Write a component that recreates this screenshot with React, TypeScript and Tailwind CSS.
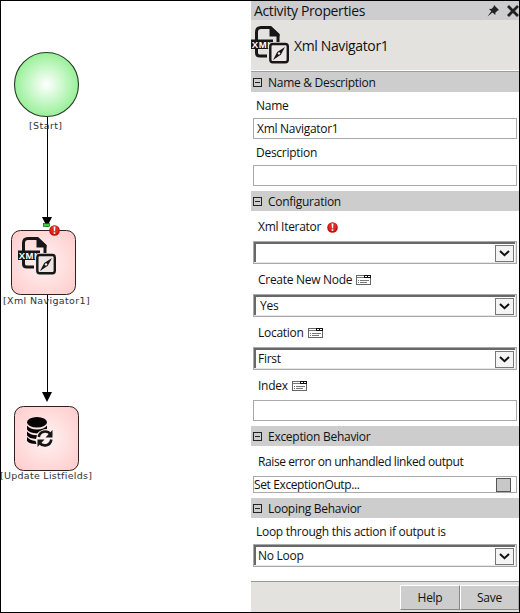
import React from 'react';

function XmlIcon({ className }: { className: string }) {
  return (
    <svg viewBox="0 0 38 38" className={className} fill="none">
      <path d="M5.5 14V6Q5.5 1.5 10 1.5H19L27 9V16" stroke="#171717" strokeWidth="3" />
      <path d="M18.5 0H20L28.5 8V10.5H18.5Z" fill="#171717" />
      <path d="M5.5 22V27Q5.5 30 9 30H16" stroke="#171717" strokeWidth="3" />
      <rect x="0" y="13.5" width="22" height="9.5" fill="#171717" />
      <text x="0.8" y="21.6" fill="#fff" className="font-['Liberation_Sans'] text-[9.5px] font-bold" textLength="21">XML</text>
      <rect x="17.2" y="16" width="22" height="22" rx="4" className="fill-[#eee5e4]" />
      <rect x="19.3" y="18" width="17.5" height="18.2" rx="2.4" stroke="#171717" strokeWidth="2.4" />
      <path d="M34 21L29.8 28.8L22 34L26.2 26Z" fill="#171717" />
      <circle cx="28" cy="27.4" r="1.2" fill="#eee" />
    </svg>
  );
}

function ErrorBadge({ className }: { className: string }) {
  return (
    <svg viewBox="0 0 11 11" className={className}>
      <circle cx="5.5" cy="5.5" r="5.3" fill="#c41010" />
      <circle cx="5.5" cy="4.8" r="4" fill="#e02a20" />
      <path d="M4.6 1.5H6.4L6.1 6.3H4.9Z" fill="#fff" />
      <rect x="4.7" y="7.3" width="1.6" height="1.6" fill="#fff" />
    </svg>
  );
}

function ListIcon({ className }: { className: string }) {
  return (
    <svg viewBox="0 0 15 10" className={className} shapeRendering="crispEdges">
      <rect x="0.5" y="0.5" width="14" height="9" fill="#fff" stroke="#666" />
      <rect x="8" y="0" width="7" height="3" fill="#111" />
      <rect x="9" y="1" width="2" height="1" fill="#fff" />
      <rect x="12" y="1" width="2" height="1" fill="#fff" />
      <path d="M1 2.5H8" stroke="#777" />
      <path d="M2 5.5H3M4 5.5H13M2 7.5H3M4 7.5H11" stroke="#777" />
    </svg>
  );
}

function Section({ title, className }: { title: string; className: string }) {
  return (
    <div className={`flex shrink-0 items-center bg-[#cdcdcd] pl-[2px] ${className}`}>
      <svg viewBox="0 0 9 9" className="h-[9px] w-[9px]" shapeRendering="crispEdges">
        <rect x="0.5" y="0.5" width="8" height="8" fill="none" stroke="#222" />
        <path d="M2 4.5H7" stroke="#222" />
      </svg>
      <span className="relative top-px ml-[6px]">{title}</span>
    </div>
  );
}

function Label({ text, className, children }: { text: string; className: string; children?: React.ReactNode }) {
  return (
    <div className={`flex shrink-0 items-center pt-[2px] ${className}`}>
      <span>{text}</span>
      {children}
    </div>
  );
}

function Select({ value, inset }: { value: string; inset: string }) {
  return (
    <div className="ml-[2px] h-[23px] w-[264px] shrink-0 border border-[#a9a9a9] bg-[#e6e6e6] pr-[1px] pb-[1px]">
      <div className="flex h-full items-center border-t-2 border-l-2 border-[#686868] bg-white">
        <span className={`flex-1 ${inset}`}>{value}</span>
        <span className="mr-[1px] flex h-[17px] w-[19px] items-center justify-center border border-[#777] bg-[#f4f4f4]">
          <svg viewBox="0 0 11 7" className="h-[7px] w-[11px]" fill="none">
            <path d="M1 1L5.5 5.2L10 1" stroke="#111" strokeWidth="2" />
          </svg>
        </span>
      </div>
    </div>
  );
}

function Canvas() {
  return (
    <div className="relative w-[250px] shrink-0 font-['DejaVu_Sans',sans-serif] text-[9.5px] leading-[12px] text-[#333]">
      <svg viewBox="0 0 250 611" className="absolute top-0 left-0 h-[611px] w-[250px]">
        <defs>
          <radialGradient id="start">
            <stop offset="0" stopColor="#fff" />
            <stop offset="0.5" stopColor="#ccf8cc" />
            <stop offset="1" stopColor="#98f098" />
          </radialGradient>
          <radialGradient id="step" r="0.7">
            <stop offset="0" stopColor="#fff3f3" />
            <stop offset="1" stopColor="#ffcaca" />
          </radialGradient>
        </defs>
        <circle cx="45.5" cy="83.5" r="32" fill="url(#start)" stroke="#283828" strokeWidth="1.1" />
        <path d="M46.5 116V218M46.5 294V393" stroke="#000" />
        <path d="M41 216H51L46 226Z M41 391H51L46 401Z" fill="#000" />
        <rect x="42.5" y="222.5" width="6" height="3" fill="#35d43c" stroke="#133d13" strokeWidth="0.6" />
        <rect x="10.5" y="229.5" width="64" height="64" rx="9" fill="url(#step)" stroke="#302020" />
        <rect x="13.5" y="405.5" width="64" height="64" rx="9" fill="url(#step)" stroke="#302020" />
        <ellipse cx="36" cy="421.2" rx="10" ry="5.2" fill="#050505" />
        <path d="M26 424.5Q29 428.5 36 428.5Q43 428.5 46 424.5V428Q40 428 36 432.5Q28 432 26 428.5Z" fill="#050505" />
        <path d="M26 430.5Q29 434 36 434.2L35 438Q28 437.5 26 434.5Z M26 436Q29 439.5 34.5 440L35.5 443Q28 443 26 440Z" fill="#050505" />
        <path d="M37.8 436C38.5 430 46 428.8 49.5 433.2" fill="none" stroke="#171717" strokeWidth="2.6" />
        <path d="M51.5 429V436.5H44.5Z" fill="#171717" />
        <path d="M50.3 438.5C49.5 445 42 446 38.5 441.8" fill="none" stroke="#171717" strokeWidth="2.6" />
        <path d="M36.5 446V438.5H43.5Z" fill="#171717" />
      </svg>
      <XmlIcon className="absolute top-[236px] left-[17px] h-[38px] w-[38px]" />
      <ErrorBadge className="absolute top-[224px] left-[48px] h-[11px] w-[11px]" />
      <span className="absolute top-[119px] left-[28px] tracking-[0.4px] whitespace-nowrap">[Start]</span>
      <span className="absolute top-[294px] left-[2px] tracking-[0.35px] whitespace-nowrap">[Xml Navigator1]</span>
      <span className="absolute top-[469px] left-[-1px] tracking-[0.28px] whitespace-nowrap">[Update Listfields]</span>
    </div>
  );
}

export default function App() {
  return (
    <div className="flex h-[613px] w-[520px] overflow-hidden border border-black bg-white">
      <Canvas />
      <div className="flex w-[268px] shrink-0 flex-col font-['Open_Sans',sans-serif] text-[12px] leading-[16px] tracking-[-0.28px] whitespace-nowrap text-[#111]">
        <div className="flex h-[19px] shrink-0 items-center bg-[#cdcdcf] pl-[3px] text-[14px] tracking-[-0.37px]">
          <span className="flex-1">Activity Properties</span>
          <svg viewBox="0 0 12 12" className="h-[12px] w-[12px]">
            <path d="M7 0L12 5L10.5 5.7L8.5 7.5L8.2 10L5.5 7.5L0.5 11.5L4.3 6.3L2 4L4.8 3.8L6.6 1.8Z" fill="#222" />
          </svg>
          <svg viewBox="0 0 12 12" className="ml-[8px] h-[12px] w-[12px]">
            <path d="M1 1L11 11M11 1L1 11" stroke="#222" strokeWidth="2.8" />
          </svg>
        </div>
        <div className="flex h-[50px] shrink-0 items-center bg-[#e4e2df] text-[14px] tracking-[-0.37px]">
          <XmlIcon className="h-[38px] w-[38px]" />
          <span className="relative top-px ml-[5px]">Xml Navigator1</span>
        </div>
        <Section title="Name & Description" className="mt-[1px] h-[21px] border-t border-[#999f9c]" />
        <Label text="Name" className="h-[26px] pl-[5px]" />
        <div className="ml-[2px] flex h-[21px] w-[264px] shrink-0 items-center border border-[#a9a9a9] pl-[3px]">Xml Navigator1</div>
        <Label text="Description" className="h-[26px] pl-[5px]" />
        <div className="ml-[2px] h-[21px] w-[264px] shrink-0 border border-[#a9a9a9]" />
        <Section title="Configuration" className="mt-[5px] h-[20px]" />
        <Label text="Xml Iterator" className="h-[30px] pl-[7px]">
          <ErrorBadge className="ml-[6px] h-[11px] w-[11px]" />
        </Label>
        <Select value="" inset="" />
        <Label text="Create New Node" className="h-[30px] pl-[7px]">
          <ListIcon className="ml-[4px] h-[10px] w-[15px]" />
        </Label>
        <Select value="Yes" inset="pl-[4px]" />
        <Label text="Location" className="h-[30px] pl-[7px]">
          <ListIcon className="ml-[4px] h-[10px] w-[15px]" />
        </Label>
        <Select value="First" inset="pl-[2px]" />
        <Label text="Index" className="h-[30px] pl-[7px]">
          <ListIcon className="ml-[4px] h-[10px] w-[15px]" />
        </Label>
        <div className="ml-[2px] h-[21px] w-[264px] shrink-0 border border-[#a9a9a9]" />
        <Section title="Exception Behavior" className="mt-[5px] h-[20px]" />
        <Label text="Raise error on unhandled linked output" className="h-[30px] pl-[7px] tracking-[-0.4px]" />
        <div className="ml-[2px] flex h-[17px] w-[264px] shrink-0 items-center border border-[#a9a9a9]">
          <span className="flex-1 tracking-[-0.38px]">Set ExceptionOutp...</span>
          <span className="mr-[5px] h-[14px] w-[15px] border border-[#555] bg-[#c8c8c8]" />
        </div>
        <Section title="Looping Behavior" className="mt-[5px] h-[20px]" />
        <Label text="Loop through this action if output is" className="h-[26px] pl-[5px]" />
        <Select value="No Loop" inset="pl-[2px]" />
        <div className="mt-[14px] flex h-[31px] shrink-0 justify-end border-t border-[#999] bg-[#e4e2df] pt-[3px]">
          <button className="h-[25px] w-[60px] border border-t-white border-r-[#888] border-b-[#888] border-l-white bg-[#cdcdcd]">Help</button>
          <button className="h-[25px] w-[59px] border border-t-white border-r-[#aaa] border-b-[#888] border-l-white bg-[#cdcdcd]">Save</button>
        </div>
      </div>
    </div>
  );
}
